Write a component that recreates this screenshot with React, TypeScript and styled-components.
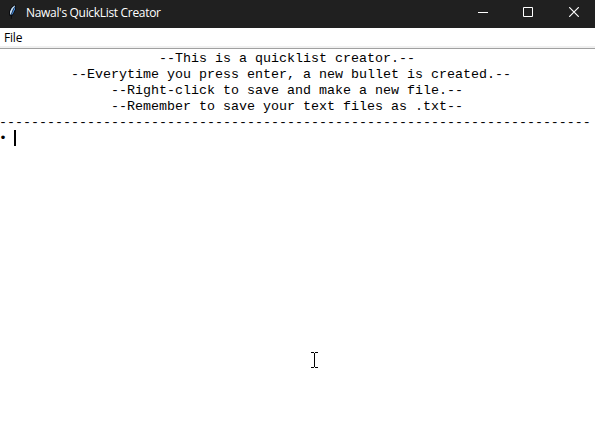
import React from 'react';
import styled, { createGlobalStyle } from 'styled-components';

const Global = createGlobalStyle`
  html, body, #root { margin: 0; height: 100%; }
  body { overflow: hidden; background: #fff; }
`;
const Win = styled.div`
  display: flex;
  flex-direction: column;
  width: 595px;
  height: 447px;
  background: #fff;
  position: relative;
`;
const TitleBar = styled.header`
  display: flex;
  align-items: flex-start;
  height: 28px;
  flex: none;
  background: #202020;
  color: #fff;
`;
const AppIcon = styled.svg`
  width: 16px;
  height: 16px;
  margin: 4px 0 0 4px;
  flex: none;
`;
const Caption = styled.span`
  flex: 1;
  margin: 5px 0 0 6px;
  font: 12px/16px "Open Sans", sans-serif;
  letter-spacing: -0.32px;
  white-space: nowrap;
`;
const WinButton = styled.button<{ $width: number }>`
  display: flex;
  align-items: flex-start;
  width: ${(p) => p.$width}px;
  height: 28px;
  flex: none;
  border: 0;
  padding: 7px 0 0 18px;
  background: none;
  color: #fff;
`;
const Glyph = styled.svg`
  width: 10px;
  height: 10px;
  flex: none;
  fill: none;
  stroke: currentColor;
`;
const MenuBar = styled.nav`
  display: flex;
  align-items: center;
  box-sizing: border-box;
  height: 21px;
  flex: none;
  background: linear-gradient(#fff 18px, #f0f0f0 18px);
  border-bottom: 1px solid #a0a0a0;
`;
const MenuItem = styled.span`
  margin-left: 4px;
  font: 12px/16px "Open Sans", sans-serif;
  letter-spacing: -0.2px;
  color: #000;
`;
const Editor = styled.main`
  flex: 1;
  padding-top: 2px;
  overflow: hidden;
  font: 13.33px/16px "Liberation Mono", "Courier New", monospace;
  color: #000;
`;
const Line = styled.div<{ $indent?: number }>`
  height: 16px;
  white-space: pre;
  padding-left: ${(p) => p.$indent ?? 0}px;
`;
const Rule = styled(Line)`
  margin-left: -1px;
`;
const BulletRow = styled.div`
  display: flex;
  align-items: flex-start;
  height: 16px;
  margin-left: -1px;
`;
const Caret = styled.span`
  width: 2px;
  height: 16px;
  margin: -1px 0 0 7px;
  background: #000;
`;
const Pointer = styled.svg`
  position: absolute;
  left: 311px;
  top: 352px;
`;

export default function App() {
  return (
    <Win>
      <Global />
      <TitleBar>
        <AppIcon viewBox="0 0 16 16">
          <path d="M5.3 11.5 5.1 7.5 7 3.5 10.5.7 12 1.2 11.8 5.5 9.6 10 8 12 7.5 15H6.9V12z" fill="#06080c" />
          <path d="M6 10.5V7.5L7.7 4 10.5 1.5l.6.5L9 5.5 7 10.5z" fill="#c3def8" />
          <path d="M7.2 10.8 9 6.5 11.2 2.3 11 5.3 9 9.5 7.8 11z" fill="#468ce0" />
          <path d="M7 11.5 8.3 7.5 10 4" stroke="#15263c" strokeWidth=".5" fill="none" />
        </AppIcon>
        <Caption>Nawal's QuickList Creator</Caption>
        <WinButton $width={45} aria-label="Minimize">
          <Glyph><path d="M0 5.5h10" /></Glyph>
        </WinButton>
        <WinButton $width={46} aria-label="Maximize">
          <Glyph><path d="M.5.5h9v9h-9z" /></Glyph>
        </WinButton>
        <WinButton $width={44} aria-label="Close">
          <Glyph><path d="M.2.2 9.8 9.8M9.8.2.2 9.8" strokeWidth="1.15" /></Glyph>
        </WinButton>
      </TitleBar>
      <MenuBar><MenuItem>File</MenuItem></MenuBar>
      <Editor>
        <Line $indent={159}>--This is a quicklist creator.--</Line>
        <Line $indent={71}>--Everytime you press enter, a new bullet is created.--</Line>
        <Line $indent={111}>--Right-click to save and make a new file.--</Line>
        <Line $indent={111}>--Remember to save your text files as .txt--</Line>
        <Rule>{'-'.repeat(74)}</Rule>
        <BulletRow>•<Caret /></BulletRow>
      </Editor>
      <Pointer width="7" height="16" shapeRendering="crispEdges">
        <path d="M3.5 1v14M0 .5h3M4 .5h3M0 15.5h3M4 15.5h3" stroke="#000" />
      </Pointer>
    </Win>
  );
}
